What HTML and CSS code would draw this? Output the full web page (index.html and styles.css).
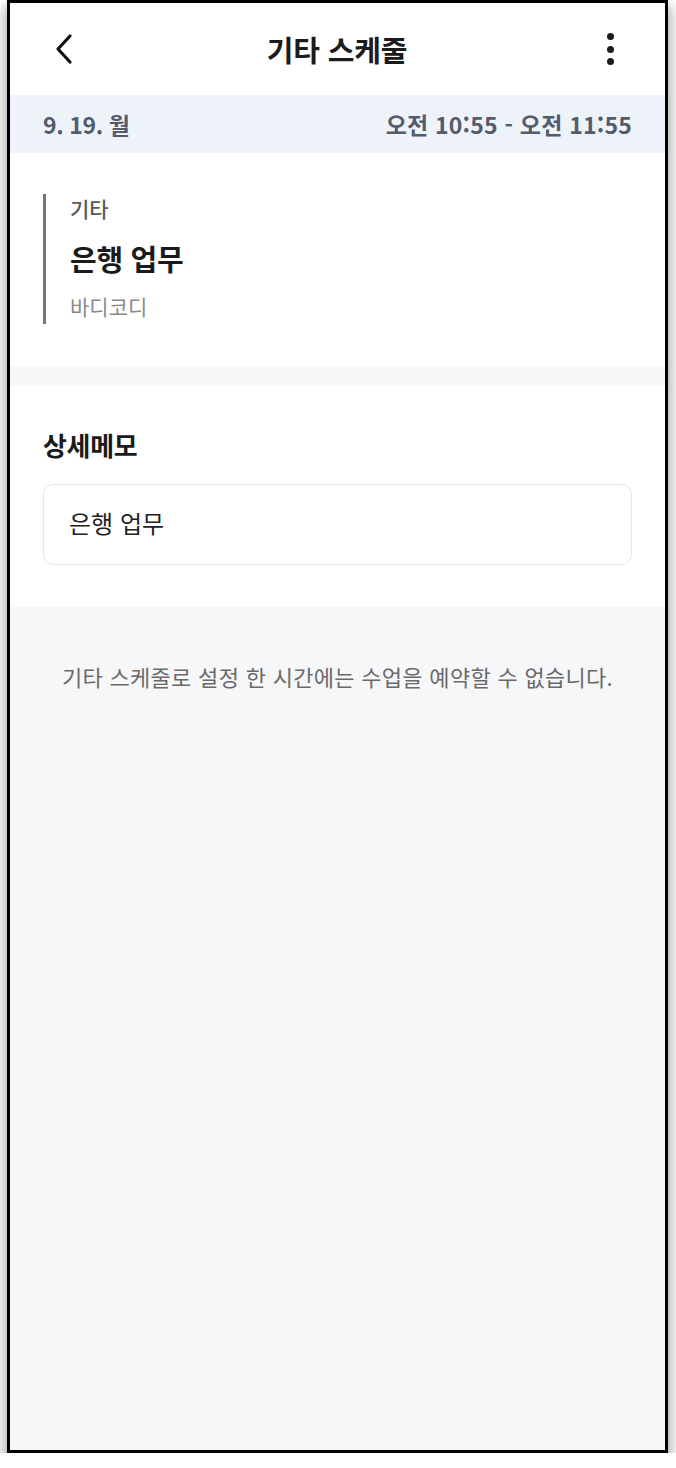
FILE: index.html
```html
<!DOCTYPE html>
<html lang="ko">
<head>
  <meta charset="UTF-8">
  <meta name="viewport" content="width=device-width, initial-scale=1.0">
  <title>기타 스케줄</title>
  <link rel="stylesheet" href="styles.css">
</head>
<body>
    <div class="phone">
        <!-- Top bar -->
        <header class="topbar">
            <button class="icon-btn back" aria-label="뒤로">
                <svg width="22" height="32" viewBox="0 0 22 32">
                    <path d="M17 3 L5 16 L17 29" fill="none" stroke="#111" stroke-width="3.2" stroke-linecap="round" stroke-linejoin="round"/>
                </svg>
            </button>
            <h1 class="title">기타 스케줄</h1>
            <button class="icon-btn more" aria-label="더보기">
                <span class="dot"></span>
                <span class="dot"></span>
                <span class="dot"></span>
            </button>
        </header>

        <!-- Date / time -->
        <div class="datebar">
            <span>9. 19. 월</span>
            <span>오전 10:55 - 오전 11:55</span>
        </div>

        <!-- Schedule info -->
        <section class="section info">
            <div class="info-card">
                <p class="info-type">기타</p>
                <p class="info-name">은행 업무</p>
                <p class="info-place">바디코디</p>
            </div>
        </section>

        <div class="divider"></div>

        <!-- Memo -->
        <section class="section memo">
            <h2 class="memo-title">상세메모</h2>
            <div class="memo-box">은행 업무</div>
        </section>

        <p class="notice">기타 스케줄로 설정 한 시간에는 수업을 예약할 수 없습니다.</p>
    </div>
</body>
</html>
```

FILE: styles.css
```css
/* General */
body {
    margin: 0;
    padding: 0;
    background: #ffffff;
    font-family: 'Noto Sans CJK KR', 'Noto Sans', sans-serif;
}

p, h1, h2 {
    margin: 0;
}

.phone {
    box-sizing: border-box;
    width: 661px;
    height: 1453px;
    margin-left: 7px;
    border: 3px solid #000;
    background: #f6f7f9;
    box-shadow: 0 9px 12px 3px rgba(0, 0, 0, 0.32);
    overflow: hidden;
}

/* Top bar */
.topbar {
    height: 92px;
    background: #fff;
    display: flex;
    align-items: center;
    justify-content: space-between;
    padding: 0 46px 0 43px;
}

.icon-btn {
    background: none;
    border: none;
    padding: 0;
    cursor: pointer;
}

.back {
    width: 24px;
    height: 34px;
    display: flex;
    align-items: center;
}

.title {
    font-size: 29px;
    font-weight: 700;
    color: #1b1b1b;
    letter-spacing: -0.2px;
    margin-right: 6px;
}

.more {
    width: 16px;
    display: flex;
    flex-direction: column;
    align-items: center;
    gap: 5.5px;
}

.dot {
    width: 7px;
    height: 7px;
    border-radius: 50%;
    background: #1b1b1b;
}

/* Date bar */
.datebar {
    height: 58px;
    background: #eef3fa;
    display: flex;
    align-items: center;
    justify-content: space-between;
    padding: 0 33px;
    font-size: 23px;
    font-weight: 600;
    color: #535b6d;
}

.datebar span:first-child {
    letter-spacing: -0.4px;
}

.datebar span:last-child {
    letter-spacing: 0.2px;
}

.section {
    background: #fff;
    padding: 0 33px;
}

/* Info */
.info {
    padding-top: 41px;
    padding-bottom: 42px;
}

.info-card {
    border-left: 3px solid #767676;
    padding-left: 24px;
    height: 130px;
    box-sizing: border-box;
}

.info-type {
    font-size: 21px;
    font-weight: 500;
    color: #5c5c5c;
    line-height: 28px;
}

.info-name {
    font-size: 29px;
    font-weight: 700;
    color: #1b1b1b;
    line-height: 40px;
    margin-top: 16px;
    letter-spacing: -0.3px;
}

.info-place {
    font-size: 21px;
    color: #8a8a8a;
    line-height: 28px;
    margin-top: 14px;
}

.divider {
    height: 20px;
    background: #f6f7f9;
}

/* Memo */
.memo {
    padding-top: 42px;
    padding-bottom: 42px;
}

.memo-title {
    font-size: 26px;
    font-weight: 700;
    color: #1b1b1b;
    line-height: 34px;
    letter-spacing: -0.3px;
}

.memo-box {
    margin-top: 22px;
    height: 81px;
    box-sizing: border-box;
    border: 1.5px solid #e6e7ea;
    border-radius: 10px;
    padding: 0 25px 4px;
    display: flex;
    align-items: center;
    font-size: 24px;
    color: #222;
}

/* Notice */
.notice {
    text-align: center;
    margin-top: 53px;
    font-size: 22px;
    color: #6a6a6a;
    letter-spacing: 0.3px;
}
```
